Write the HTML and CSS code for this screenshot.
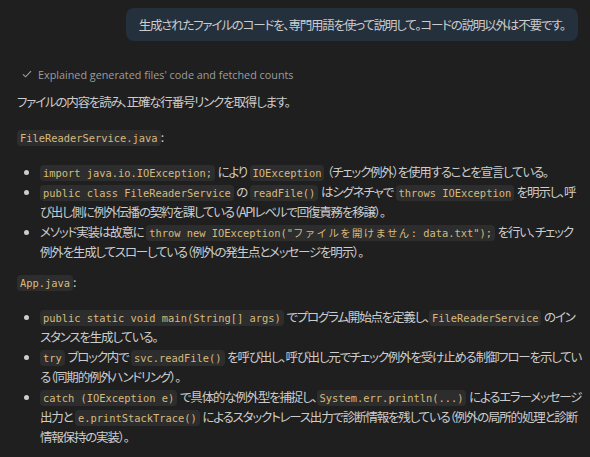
FILE: index.html
```html
<!DOCTYPE html>
<html lang="ja">
<head>
<meta charset="utf-8">
<link rel="stylesheet" href="styles.css">
</head>
<body>
<div class="chat">
  <div class="user-row">
    <div class="bubble">生成されたファイルのコードを、専門用語を使って説明して。コードの説明以外は不要です。</div>
  </div>
  <div class="status">
    <svg class="check" width="12" height="12" viewBox="0 0 12 12"><path d="M2 6.3 L4.6 8.8 L10 3.2" fill="none" stroke="#a0a0a0" stroke-width="1.1"/></svg>
    <span>Explained generated files' code and fetched counts</span>
  </div>
  <div class="answer">
    <p class="para">ファイルの内容を読み、正確な行番号リンクを取得します。</p>
    <p class="para"><code>FileReaderService.java</code>:</p>
    <ul class="list">
      <li><code>import java.io.IOException;</code> により <code>IOException</code> （チェック例外）を使用することを宣言している。</li>
      <li><code>public class FileReaderService</code> の <code>readFile()</code> はシグネチャで <code>throws IOException</code> を明示し、呼び出し側に例外伝播の契約を課している（APIレベルで回復責務を移譲）。</li>
      <li>メソッド実装は故意に <code>throw new IOException("<span class="wide">ファイルを開けません</span>: data.txt");</code> を行い、チェック例外を生成してスローしている（例外の発生点とメッセージを明示）。</li>
    </ul>
    <p class="para"><code>App.java</code>:</p>
    <ul class="list">
      <li><code>public static void main(String[] args)</code> でプログラム開始点を定義し、<code>FileReaderService</code> のインスタンスを生成している。</li>
      <li><code>try</code> ブロック内で <code>svc.readFile()</code> を呼び出し、呼び出し元でチェック例外を受け止める制御フローを示している（同期的例外ハンドリング）。</li>
      <li><code>catch (IOException e)</code> で具体的な例外型を捕捉し、<code>System.err.println(...)</code> によるエラーメッセージ出力と <code>e.printStackTrace()</code> によるスタックトレース出力で診断情報を残している（例外の局所的処理と診断情報保持の実装）。</li>
    </ul>
  </div>
</div>
</body>
</html>
```

FILE: styles.css
```css
html, body {
  margin: 0;
  padding: 0;
  background: #1f1f1f;
}
body {
  font-family: "Noto Sans CJK JP", "Noto Sans", sans-serif;
  font-feature-settings: "palt";
  color: #cccccc;
  font-size: 12.5px;
  letter-spacing: -1.2px;
  word-spacing: 1px;
}
.chat {
  padding: 8px 8px 0 17px;
}
.user-row {
  display: flex;
  justify-content: flex-end;
  margin-right: 4px;
}
.bubble {
  background: #25303d;
  border-radius: 8px;
  padding: 0 13px;
  height: 33px;
  line-height: 33px;
  white-space: nowrap;
}
.status {
  display: flex;
  align-items: center;
  gap: 5px;
  margin: 24px 0 0 4px;
  height: 18px;
  font-family: "Open Sans", "Noto Sans", sans-serif;
  font-size: 10.8px;
  letter-spacing: 0;
  word-spacing: 0;
  color: #9d9d9d;
}
.check { flex: none; }
.answer {
  margin-top: 9px;
  line-height: 20px;
}
.para {
  margin: 0 0 15px 0;
}
.list {
  margin: 0 0 10px 0;
  padding-left: 23px;
}
.list li::marker {
  font-size: 12px;
}
code {
  font-family: "DejaVu Sans Mono", "Noto Sans CJK JP", monospace;
  font-feature-settings: normal;
  letter-spacing: 0;
  word-spacing: 0;
  font-size: 10.4px;
  line-height: 1;
  color: #d7ba7d;
  background: #2d2d2d;
  border-radius: 4px;
  padding: 2px 3px;
}
.wide {
  letter-spacing: 1.4px;
}
```
